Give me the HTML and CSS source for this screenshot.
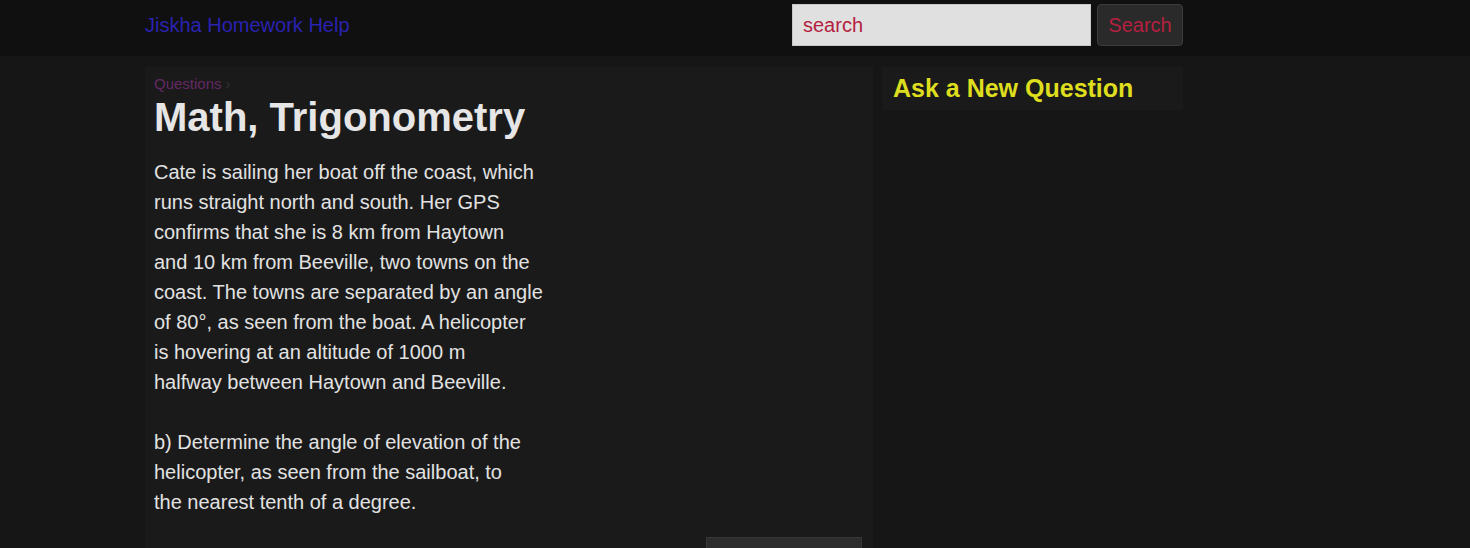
FILE: index.html
```html
<!DOCTYPE html>
<html lang="en">
<head>
<meta charset="utf-8">
<title>Math, Trigonometry - Jiskha Homework Help</title>
<link rel="stylesheet" href="styles.css">
</head>
<body>
<header class="site-header">
  <div class="wrap header-inner">
    <a class="logo" href="#">Jiskha Homework Help</a>
    <form class="search-form">
      <input class="search-input" type="text" value="search">
      <button class="search-btn" type="button">Search</button>
    </form>
  </div>
</header>
<div class="wrap layout">
  <main class="card main-card">
    <nav class="crumbs"><a href="#" class="crumb-link">Questions</a><span class="crumb-sep">›</span></nav>
    <h1 class="title">Math, Trigonometry</h1>
    <p class="question">Cate is sailing her boat off the coast, which<br>runs straight north and south. Her GPS<br>confirms that she is 8 km from Haytown<br>and 10 km from Beeville, two towns on the<br>coast. The towns are separated by an angle<br>of 80°, as seen from the boat. A helicopter<br>is hovering at an altitude of 1000 m<br>halfway between Haytown and Beeville.<br><br>b) Determine the angle of elevation of the<br>helicopter, as seen from the sailboat, to<br>the nearest tenth of a degree.</p>
    <div class="actions"><div class="action-box"></div></div>
  </main>
  <aside class="sidebar">
    <div class="card side-card">
      <h2 class="ask">Ask a New Question</h2>
    </div>
  </aside>
</div>
</body>
</html>
```
FILE: styles.css
```css
html, body {
  margin: 0;
  padding: 0;
}
body {
  background: #161616;
  font-family: "Liberation Sans", Arial, sans-serif;
  color: #e2e2e2;
}
.wrap {
  width: 1038px;
  margin-left: 145px;
}
.site-header {
  background: #101010;
  padding: 4px 0 10px;
}
.header-inner {
  display: flex;
  justify-content: space-between;
  align-items: flex-start;
}
.logo {
  font-size: 20px;
  line-height: 42px;
  color: #2a22b0;
  text-decoration: none;
}
.search-form {
  display: flex;
  gap: 6px;
}
.search-input {
  box-sizing: border-box;
  width: 299px;
  height: 42px;
  margin: 0;
  padding: 0 10px;
  border: 1px solid #c8c8c8;
  background: #e0e0e0;
  color: #b5203f;
  font-family: "Liberation Sans", Arial, sans-serif;
  font-size: 20px;
  outline: none;
}
.search-btn {
  box-sizing: border-box;
  height: 42px;
  width: 86px;
  margin: 0;
  padding: 0;
  border: 1px solid #3c3c3c;
  border-radius: 4px;
  background: #2a2a2a;
  color: #b5203f;
  font-family: "Liberation Sans", Arial, sans-serif;
  font-size: 20px;
}
.layout {
  display: grid;
  grid-template-columns: 728px 301px;
  gap: 9px;
  margin-top: 11px;
  align-items: start;
}
.card {
  background: #1a1a1a;
}
.main-card {
  padding: 8px 11px 0 9px;
  min-height: 500px;
}
.crumbs {
  font-size: 15px;
  line-height: 18px;
}
.crumb-link {
  color: #642864;
  text-decoration: none;
}
.crumb-sep {
  color: #333;
  margin-left: 4px;
}
.title {
  margin: 0;
  font-size: 40px;
  line-height: 48px;
  font-weight: bold;
  color: #e6e6e6;
}
.question {
  margin: 16px 0 0;
  font-size: 20px;
  line-height: 30px;
  color: #e2e2e2;
}
.actions {
  display: flex;
  justify-content: flex-end;
  margin-top: 20px;
}
.action-box {
  width: 156px;
  height: 40px;
  box-sizing: border-box;
  background: #2d2d2d;
  border: 1px solid #363636;
}
.side-card {
  padding: 9px 11px;
}
.ask {
  margin: 0;
  font-size: 25px;
  line-height: 25px;
  font-weight: bold;
  color: #dede1e;
}
```
